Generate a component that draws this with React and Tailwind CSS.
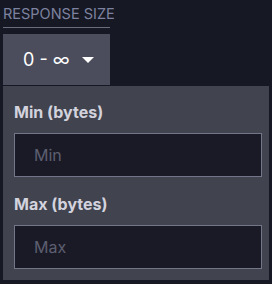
import React from 'react';

const FONT = { fontFamily: 'Inter, "Noto Sans", sans-serif' };

const Field = ({ label, placeholder }) => (
  <div>
    <label className="block text-[16px] font-bold text-[#d3d3de] leading-5 mb-[11px]">{label}</label>
    <input
      placeholder={placeholder}
      className="block w-full h-[44px] bg-[#1a1a27] border border-[#737588] px-[19px] text-[16px] text-white placeholder:text-[#5d5f70] outline-none"
    />
  </div>
);

export default function App() {
  return (
    <div className="w-[272px] h-[284px] bg-[#161823] overflow-hidden pl-[3px] pt-[6px]" style={FONT}>
      <div className="w-[107px] whitespace-nowrap text-[14.5px] text-[#7d82a0] leading-4 pb-[5px] border-b border-[#6a6d80]">
        RESPONSE SIZE
      </div>
      <button className="mt-[6px] w-[107px] h-[51px] bg-[#4b4d5c] flex items-center pl-[20px] gap-[12px] text-white text-[18px]">
        <span>0 - ∞</span>
        <svg width="12" height="6" viewBox="0 0 12 6"><path d="M0 0h12L6 6z" fill="#fff" /></svg>
      </button>
      <div className="mt-px w-[266px] h-[194px] bg-[#41434f] pl-[11px] pr-[7px] pt-[16px] flex flex-col gap-[17px]">
        <Field label="Min (bytes)" placeholder="Min" />
        <Field label="Max (bytes)" placeholder="Max" />
      </div>
    </div>
  );
}
